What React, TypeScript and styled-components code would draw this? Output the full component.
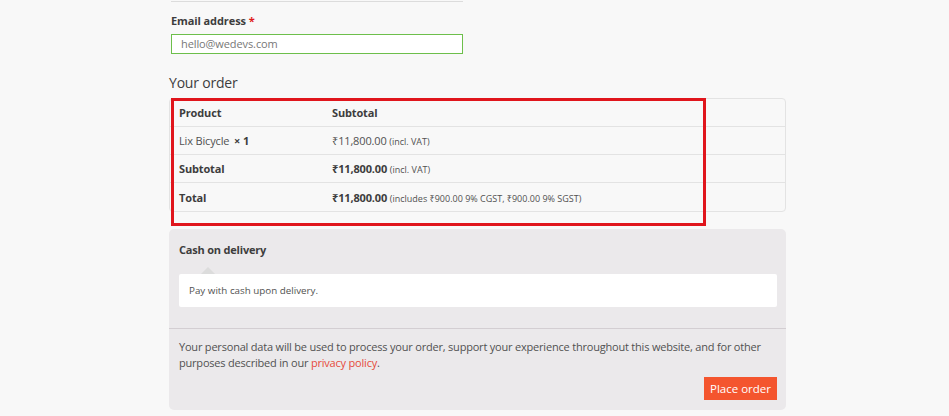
import styled, { createGlobalStyle } from 'styled-components';

const GlobalStyle = createGlobalStyle`
  html, body {
    margin: 0;
    padding: 0;
    background: #f8f8f8;
  }
  body {
    font-family: "Open Sans", "Noto Sans", sans-serif;
    color: #515151;
  }
`;

const Page = styled.div`
  width: 949px;
  height: 416px;
  overflow: hidden;
  padding-left: 169px;
  box-sizing: border-box;
`;

const Column = styled.div`
  width: 617px;
`;

const PrevField = styled.div`
  margin-left: 2px;
  width: 292px;
  height: 1px;
  border-bottom: 1px solid #dcdcdc;
`;

const FieldRow = styled.div`
  padding: 10px 2px 0;
`;

const Label = styled.label`
  display: block;
  font-size: 11px;
  font-weight: 700;
  letter-spacing: -0.1px;
  color: #3d3d3d;
  line-height: 18px;
  margin-bottom: 4px;
`;

const Required = styled.span`
  color: #e01a1a;
`;

const Input = styled.div`
  width: 292px;
  height: 20px;
  box-sizing: border-box;
  border: 1px solid #6dbf4b;
  background: #fff;
  font-size: 11px;
  letter-spacing: -0.1px;
  color: #777;
  line-height: 18px;
  padding-left: 9px;
`;

const Heading = styled.h3`
  margin: 19px 0 5px;
  font-size: 14px;
  font-weight: 400;
  letter-spacing: -0.2px;
  color: #3d3d3d;
  line-height: 20px;
`;

const TableWrap = styled.div`
  position: relative;
`;

const Table = styled.div`
  border: 1px solid #e3e3e3;
  border-radius: 4px;
  background: #f8f8f8;
`;

const Row = styled.div<{ last?: boolean }>`
  display: grid;
  grid-template-columns: 153px 1fr;
  height: 28px;
  align-items: center;
  padding-left: 9px;
  border-bottom: ${({ last }) => (last ? 'none' : '1px solid #e3e3e3')};
  box-sizing: border-box;
  font-size: 11px;
  letter-spacing: -0.15px;
  color: #515151;
`;

const Cell = styled.div<{ bold?: boolean }>`
  font-weight: ${({ bold }) => (bold ? 700 : 400)};
  color: ${({ bold }) => (bold ? '#3d3d3d' : '#515151')};
  white-space: nowrap;
`;

const Qty = styled.strong`
  margin-left: 2px;
  color: #3d3d3d;
`;

const Small = styled.small`
  font-size: 9px;
  font-weight: 400;
  letter-spacing: 0;
  color: #515151;
`;

const Highlight = styled.div`
  position: absolute;
  left: 2px;
  top: 0;
  width: 535px;
  height: 128px;
  border: 3px solid #e0151c;
  box-sizing: border-box;
  pointer-events: none;
`;

const Payment = styled.div`
  margin-top: 17px;
  background: #ebe9eb;
  border-radius: 5px;
  height: 181px;
`;

const Methods = styled.div`
  padding: 12px 9px 21px 10px;
  border-bottom: 1px solid #d3ced2;
`;

const MethodName = styled.div`
  font-size: 11px;
  font-weight: 700;
  letter-spacing: -0.2px;
  color: #3d3d3d;
  line-height: 18px;
`;

const MethodBox = styled.div`
  position: relative;
  margin-top: 15px;
  background: #fff;
  border-radius: 2px;
  height: 33px;
  display: flex;
  align-items: center;
  padding-left: 10px;
  font-size: 9.8px;
  color: #515151;

  &::before {
    content: '';
    position: absolute;
    top: -7px;
    left: 22px;
    border: 7px solid transparent;
    border-top: 0;
    border-bottom-color: #dcdcdc;
  }
`;

const Terms = styled.div`
  padding: 10px 9px 9px 10px;
`;

const Privacy = styled.p`
  margin: 0;
  font-size: 11px;
  letter-spacing: -0.2px;
  line-height: 16px;
  color: #515151;
`;

const Link = styled.a`
  color: #e64b3b;
  text-decoration: none;
`;

const Actions = styled.div`
  display: flex;
  justify-content: flex-end;
  margin-top: 6px;
`;

const Button = styled.button`
  background: #f4552e;
  color: #fff;
  border: none;
  font-family: inherit;
  font-size: 11.5px;
  height: 23px;
  width: 73px;
  padding: 0;
  cursor: pointer;
`;

export default function App() {
  return (
    <>
      <GlobalStyle />
      <Page>
        <Column>
          <PrevField />
          <FieldRow>
            <Label>
              Email address <Required>*</Required>
            </Label>
            <Input>hello@wedevs.com</Input>
          </FieldRow>
          <Heading>Your order</Heading>
          <TableWrap>
            <Table>
              <Row>
                <Cell bold>Product</Cell>
                <Cell bold>Subtotal</Cell>
              </Row>
              <Row>
                <Cell>
                  Lix Bicycle <Qty>× 1</Qty>
                </Cell>
                <Cell>
                  ₹11,800.00 <Small>(incl. VAT)</Small>
                </Cell>
              </Row>
              <Row>
                <Cell bold>Subtotal</Cell>
                <Cell bold>
                  ₹11,800.00 <Small>(incl. VAT)</Small>
                </Cell>
              </Row>
              <Row last>
                <Cell bold>Total</Cell>
                <Cell bold>
                  ₹11,800.00{' '}
                  <Small>(includes ₹900.00 9% CGST, ₹900.00 9% SGST)</Small>
                </Cell>
              </Row>
            </Table>
            <Highlight />
          </TableWrap>
          <Payment>
            <Methods>
              <MethodName>Cash on delivery</MethodName>
              <MethodBox>Pay with cash upon delivery.</MethodBox>
            </Methods>
            <Terms>
              <Privacy>
                Your personal data will be used to process your order, support your
                experience throughout this website, and for other purposes described in
                our <Link href="#">privacy policy</Link>.
              </Privacy>
              <Actions>
                <Button>Place order</Button>
              </Actions>
            </Terms>
          </Payment>
        </Column>
      </Page>
    </>
  );
}
